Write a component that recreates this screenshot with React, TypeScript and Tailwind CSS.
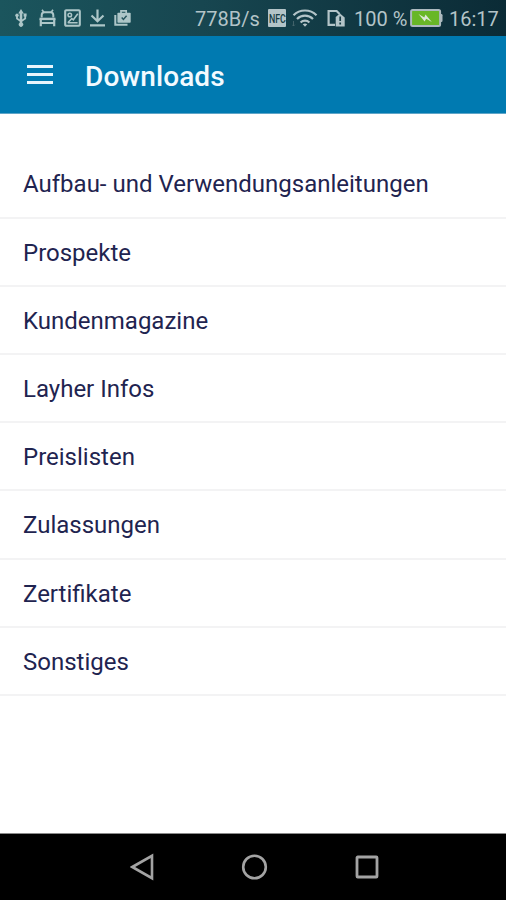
import React from 'react'

const categories = [
  'Aufbau- und Verwendungsanleitungen',
  'Prospekte',
  'Kundenmagazine',
  'Layher Infos',
  'Preislisten',
  'Zulassungen',
  'Zertifikate',
  'Sonstiges'
]

const UsbIcon: React.FC = () => (
  <svg width="12" height="18" viewBox="0 0 12 18" fill="#adc6c8">
    <path d="M6 0 8.8 4.4H7.3v6l2-1.3V7.6h-.7V4.6h3v3h-.5v2.3l-3.8 2.5v1.4a2.2 2.2 0 1 1-2.6 0v-1.4L1.1 9.9V7.8a1.7 1.7 0 1 1 1.8 0v1.3l1.8 1.3v-6H3.2z" />
  </svg>
)

const AndroidIcon: React.FC = () => (
  <svg width="17" height="18" viewBox="0 0 17 18" fill="none" stroke="#adc6c8">
    <path d="M3 .8l2 2.7M14 .8l-2 2.7" strokeWidth="1.6" />
    <path d="M2.7 8.5V6q0-2.8 2.8-2.8h6q2.8 0 2.8 2.8v2.5" strokeWidth="2" />
    <path d="M.5 9.9h16" strokeWidth="2.4" />
    <path d="M1.8 10v7.2M15.2 10v7.2" strokeWidth="2.2" />
    <path d="M2 14h13" strokeWidth="2" />
  </svg>
)

const PictureIcon: React.FC = () => (
  <svg width="17" height="18" viewBox="0 0 17 18" fill="none" stroke="#adc6c8">
    <rect x="1.2" y="1.2" width="14.6" height="15.6" rx="1" strokeWidth="2.1" />
    <circle cx="5.8" cy="6" r="1.8" strokeWidth="1.5" />
    <path d="m3.8 13.8 4-4.3 1.5 1.3 4.5-6M3.8 13.8h9.8" strokeWidth="1.6" />
  </svg>
)

const DownloadIcon: React.FC = () => (
  <svg width="15" height="18" viewBox="0 0 15 18" fill="none" stroke="#adc6c8" strokeWidth="2.2">
    <path d="M7.5.5v11.5M1.5 6.5l6 5.7 6-5.7M0 16.4h15" />
  </svg>
)

const BagIcon: React.FC = () => (
  <svg width="17" height="18" viewBox="0 0 17 18">
    <path d="M1.3 6v9.7h12.2" fill="none" stroke="#adc6c8" strokeWidth="2" />
    <path d="M7 4.2V1.9h5.2v2.3" fill="none" stroke="#adc6c8" strokeWidth="1.7" />
    <rect x="3.4" y="3.8" width="13.3" height="10" rx=".8" fill="#adc6c8" />
    <path d="m7.7 8.6 1.7 1.8 3.2-3.6" fill="none" stroke="#27555e" strokeWidth="1.5" />
  </svg>
)

const WifiIcon: React.FC = () => (
  <svg width="26" height="18" viewBox="0 0 26 18" fill="none" stroke="#b3c4c8">
    <path d="M1.5 6.2a16.4 16.4 0 0 1 23 0" strokeWidth="2.2" />
    <path d="M5 10a11.4 11.4 0 0 1 16 0" strokeWidth="2.2" />
    <path d="M8.6 13.5a6.3 6.3 0 0 1 8.8 0" strokeWidth="2.2" />
    <path d="m10.7 15.2 2.3 2.5 2.3-2.5q-2.3-1.5-4.6 0z" fill="#b3c4c8" stroke="none" />
    <path d="M1.5 12v5M.2 15.7 1.5 17l1.3-1.3" stroke="#47666e" strokeWidth=".9" />
  </svg>
)

const SimAlertIcon: React.FC = () => (
  <svg width="18" height="18" viewBox="0 0 18 18">
    <path d="M8 15.8H1.6V2h8l3 3" fill="none" stroke="#b3c4c8" strokeWidth="2.2" />
    <path d="M8.7 8 13 4.5 17.7 8.6v8.8h-9z" fill="#b3c4c8" />
    <path d="M13.2 7.5V12M13.2 13.5v2" stroke="#163c45" strokeWidth="1.7" />
  </svg>
)

const BatteryIcon: React.FC = () => (
  <svg width="33" height="18" viewBox="0 0 33 18">
    <path d="M30 5h1.3q1.2 0 1.2 1.2v5.6q0 1.2-1.2 1.2H30z" fill="#adbabf" />
    <rect x="1.1" y="1.1" width="29" height="15.8" rx="1.5" fill="#68b727" stroke="#adbabf" strokeWidth="2" />
    <path d="m8.5 5 5.8 3.4 1.2-3L21.8 13l-5.6-3.2-1.6 2.7z" fill="#dce8d8" />
  </svg>
)

const StatusBar: React.FC = () => (
  <div className="flex h-9 items-center bg-linear-to-r from-[#1b555d] via-[#174650] via-40% to-[#0b2b36] pr-2 pl-[15px] text-[20px] leading-none text-[#b3c4c8]">
    <div className="flex items-center gap-[9px]">
      <UsbIcon />
      <div className="ml-[3px] flex items-center gap-[8px]">
        <AndroidIcon />
        <PictureIcon />
        <span className="ml-px"><DownloadIcon /></span>
        <span className="ml-px"><BagIcon /></span>
      </div>
    </div>
    <div className="ml-auto flex items-center whitespace-nowrap">
      <span className="w-[73px] pt-0.5">778B/s</span>
      <span className="flex h-[18px] w-[18px] items-center justify-center rounded-[1px] bg-[#b3c4c8]">
        <span className="scale-x-[0.68] text-[13px] font-medium text-[#163c45]">NFC</span>
      </span>
      <span className="ml-1.5"><WifiIcon /></span>
      <span className="ml-[9px]"><SimAlertIcon /></span>
      <span className="ml-[9px] w-[56px] pt-0.5">100 %</span>
      <BatteryIcon />
      <span className="ml-1.5 w-[49px] pt-0.5">16:17</span>
    </div>
  </div>
)

const Header: React.FC = () => (
  <header className="flex h-[78px] items-center border-b border-[#5fa5c8] bg-[#007ab1] pt-1 pl-[27px]">
    <button className="mb-1 flex w-[26px] flex-col gap-[5px]" aria-label="Menu">
      <span className="h-[3px] w-full bg-[#e8f5fd]" />
      <span className="h-[3px] w-full bg-[#e8f5fd]" />
      <span className="h-[3px] w-full bg-[#e8f5fd]" />
    </button>
    <h1 className="ml-8 text-[28px] leading-none font-medium tracking-[0.1px] text-[#f2faff]">Downloads</h1>
  </header>
)

const NavigationBar: React.FC = () => (
  <nav className="flex h-[67px] items-center border-t border-[#8a8a8a] bg-black pl-[130px]">
    <svg width="24" height="28" viewBox="0 0 24 28" fill="none" stroke="#a3a3a3" strokeWidth="2.6">
      <path d="M2.3 14 22 2.8v22.4z" />
    </svg>
    <svg className="ml-[87px]" width="27" height="28" viewBox="0 0 27 28" fill="none" stroke="#a3a3a3" strokeWidth="2.6">
      <circle cx="13.5" cy="14" r="11.3" />
    </svg>
    <svg className="ml-[87px]" width="24" height="28" viewBox="0 0 24 28" fill="none" stroke="#a3a3a3" strokeWidth="2.8">
      <rect x="2" y="4" width="20" height="20" rx=".8" />
    </svg>
  </nav>
)

export default function App() {
  return (
    <div className="flex h-[900px] w-[506px] flex-col overflow-hidden bg-white font-[Roboto,sans-serif]">
      <StatusBar />
      <Header />
      <main className="flex-1 pt-[36.4px]">
        <ul>
          {categories.map((name) => (
            <li
              key={name}
              className="flex h-[68.2px] items-center border-b-2 border-[#f3f3f4] pt-0.5 pl-[23px] text-[24px] whitespace-nowrap text-[#1f2450]"
            >
              {name}
            </li>
          ))}
        </ul>
      </main>
      <NavigationBar />
    </div>
  )
}
